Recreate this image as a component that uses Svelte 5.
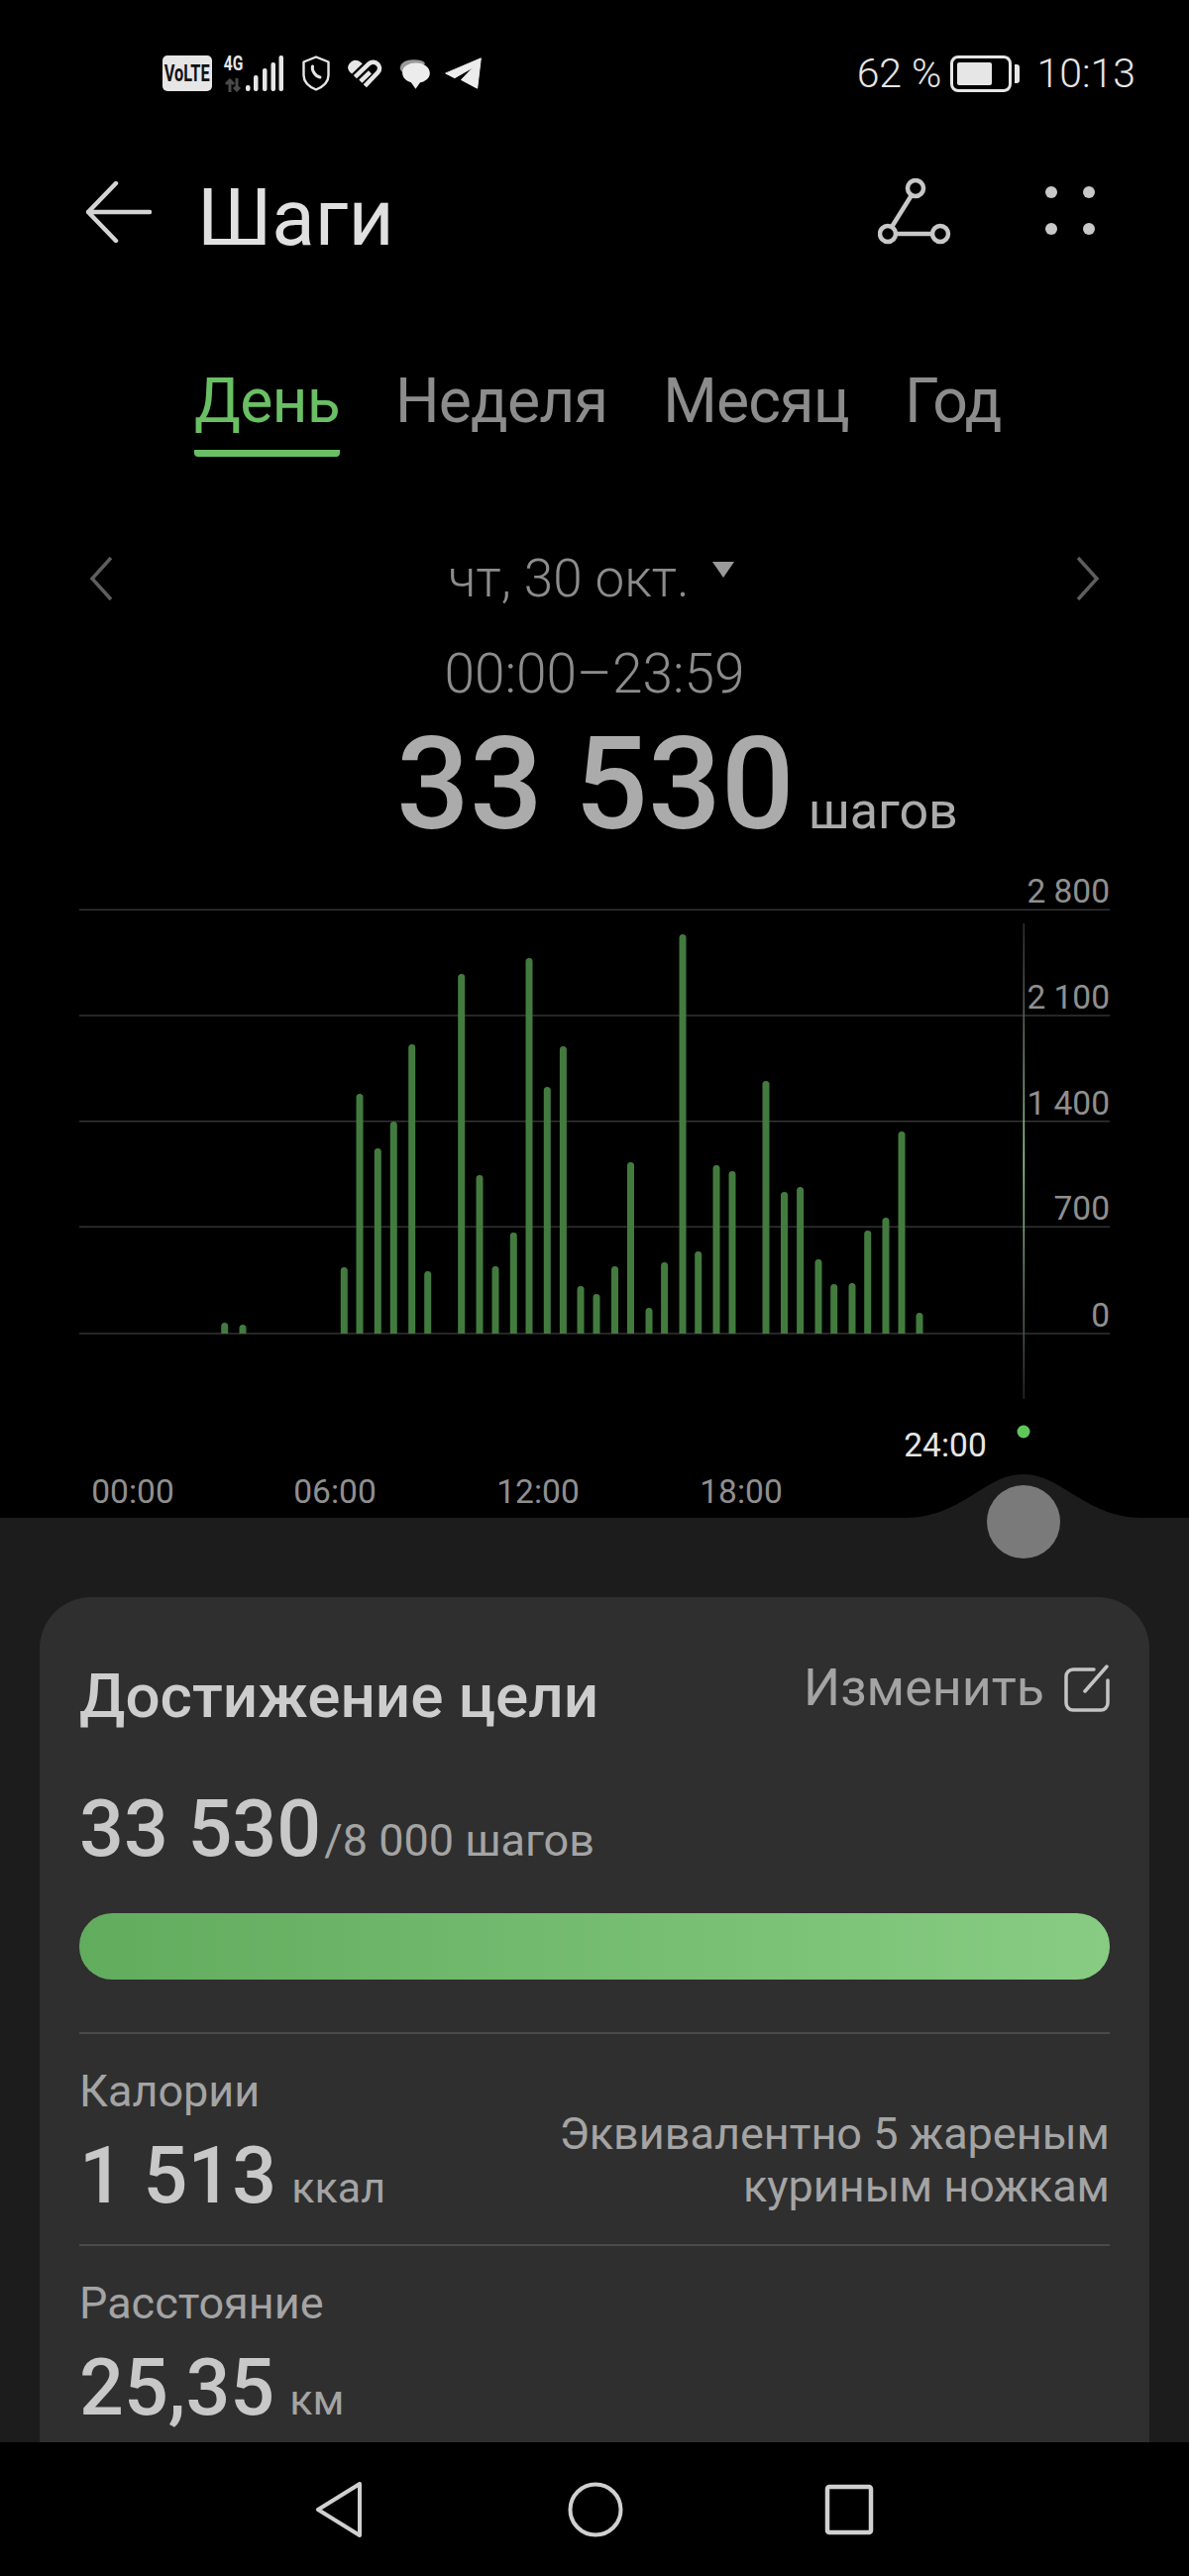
<script lang="ts">
	// x центра столбика и y его верхушки, в координатах графика
	const bars: [number, number][] = [
		[226.7, 1335], [245, 1337], [347.3, 1279], [363, 1104], [381.3, 1159], [397.3, 1132],
		[415.7, 1054], [431.7, 1283], [465.7, 983], [484, 1186], [500, 1278], [518.3, 1244],
		[534, 967], [552.3, 1097], [568.4, 1056], [586, 1298], [602, 1306], [620.5, 1278],
		[636.5, 1173], [655, 1320], [670.6, 1274], [689, 943], [704.7, 1263], [723, 1176],
		[739, 1182], [773, 1091], [791.5, 1203], [807.6, 1198], [826, 1271], [841.7, 1296],
		[860, 1295], [875.7, 1242], [894, 1229], [910, 1142], [928, 1325]
	];
	const grid = [
		{ y: 918.3, label: '2 800' },
		{ y: 1025, label: '2 100' },
		{ y: 1131.7, label: '1 400' },
		{ y: 1238.3, label: '700' },
		{ y: 1346, label: '0' }
	];
	const hours = [
		{ x: 134, label: '00:00' },
		{ x: 338, label: '06:00' },
		{ x: 543, label: '12:00' },
		{ x: 748, label: '18:00' }
	];
	const tabs = ['День', 'Неделя', 'Месяц', 'Год'];

	const barPath = ([x, top]: [number, number]) =>
		`M${x - 3.5} 1346V${top + 3.5}a3.5 3.5 0 0 1 7 0V1346Z`;
</script>

<div class="screen">
	<div class="status">
		<div class="status-left">
			<div class="volte"><span>VoLTE</span></div>
			<div class="net">
				<span class="net-4g">4G</span>
				<svg class="net-arrows" width="18" height="14" viewBox="0 0 18 14" fill="none" stroke="#4a4a4a" stroke-width="3">
					<path d="M5 14V2M1 6l4-4 4 4" />
					<path d="M12 0v12M9 9l3 3 3-3" />
				</svg>
			</div>
			<svg class="signal" width="38" height="36" viewBox="0 0 38 36" fill="#e6e6e6">
				<rect x="0" y="30" width="4.5" height="6" rx="2" />
				<rect x="8" y="20" width="4.5" height="16" rx="2" />
				<rect x="17" y="13" width="4.5" height="23" rx="2" />
				<rect x="25.5" y="7" width="4.5" height="29" rx="2" />
				<rect x="33.5" y="0" width="4.5" height="36" rx="2" />
			</svg>
			<svg class="shield" width="28" height="36" viewBox="0 0 28 36" fill="none" stroke="#e6e6e6" stroke-width="2.4">
				<path d="M14 1.5 26.5 6.5V20C26.5 27 20 32 14 34.5 8 32 1.5 27 1.5 20V6.5Z" stroke-linejoin="round" />
				<path d="M10.5 11c-1 3 2 10 7.5 11" stroke-width="3" stroke-linecap="round" />
			</svg>
			<svg class="heart" width="37" height="33" viewBox="625 52 115 100" fill="none" stroke="#e6e6e6" stroke-width="14">
				<path d="M632 72Q650 48 674 70L641 102Q622 88 632 72Z" fill="#e6e6e6" stroke="none" />
				<path d="M651 112 695 70C712 56 740 78 722 98L682 140" stroke-linecap="butt" />
				<path d="M668 126 698 97" stroke-linecap="butt" />
			</svg>
			<svg class="chat" width="33" height="31" viewBox="783 56 100 95">
				<path d="M788 84Q792 60 830 60 860 60 866 72L800 100Q788 96 788 84Z" fill="#9a9a9a" />
				<path d="M795 100C795 80 815 70 838 70 862 70 880 84 880 102 880 118 862 130 850 130L836 150 822 130C806 126 795 116 795 100Z" fill="#ececec" />
			</svg>
			<svg class="plane" width="37" height="32" viewBox="926 56 112 96">
				<path d="M928 104 1036 58 1025 150 976 124 1012 86 956 118Z" fill="#ececec" stroke="#ececec" stroke-width="3" stroke-linejoin="round" />
			</svg>
		</div>
		<div class="status-right">
			<span class="pct">62 %</span>
			<div class="battery">
				<div class="battery-body"><div class="battery-fill"></div></div>
				<div class="battery-nub"></div>
			</div>
			<span class="clock">10:13</span>
		</div>
	</div>

	<div class="appbar">
		<svg class="back" width="66" height="62" viewBox="0 0 66 62" fill="none" stroke="#d4d4d4" stroke-width="4.5" stroke-linecap="round" stroke-linejoin="round">
			<path d="M2 31H64M30 2 2 31 30 60" />
		</svg>
		<h1>Шаги</h1>
		<svg class="route" width="76" height="68" viewBox="0 0 76 68" fill="none" stroke="#c8c8c8" stroke-width="4.5">
			<circle cx="38" cy="10" r="8" />
			<circle cx="10" cy="56" r="8" />
			<circle cx="63" cy="56" r="8" />
			<path d="M34 17 14 49M18 56H55" />
		</svg>
		<svg class="more" width="50" height="50" viewBox="0 0 50 50" fill="#c8c8c8">
			<circle cx="6" cy="6" r="6" />
			<circle cx="44" cy="6" r="6" />
			<circle cx="6" cy="43" r="6" />
			<circle cx="44" cy="43" r="6" />
		</svg>
	</div>

	<div class="tabs">
		{#each tabs as tab, i}
			<div class="tab" class:active={i === 0}>{tab}</div>
		{/each}
	</div>

	<div class="date-row">
		<svg width="24" height="44" viewBox="0 0 24 44" fill="none" stroke="#5e5e5e" stroke-width="3.5">
			<path d="M22 1 3 22 22 43" />
		</svg>
		<div class="date">
			<span>чт, 30 окт.</span>
			<svg width="24" height="18" viewBox="0 0 24 18" fill="#9a9a9a"><path d="M1 1H23L12 17Z" /></svg>
		</div>
		<svg width="24" height="44" viewBox="0 0 24 44" fill="none" stroke="#5e5e5e" stroke-width="3.5">
			<path d="M2 1 21 22 2 43" />
		</svg>
	</div>

	<div class="range">00:00–23:59</div>
	<div class="total"><span class="total-num">33 530</span><span class="total-unit">шагов</span></div>

	<svg class="chart" width="1200" height="652" viewBox="0 880 1200 652">
		<defs>
			<linearGradient id="cursor" x1="0" y1="0" x2="0" y2="1">
				<stop offset="0" stop-color="#2e2e2e" />
				<stop offset="0.2" stop-color="#56655a" />
				<stop offset="0.5" stop-color="#9ccf96" />
				<stop offset="0.85" stop-color="#4c5a4e" />
				<stop offset="1" stop-color="#262626" />
			</linearGradient>
		</defs>
		{#each grid as line}
			<line x1="80" x2="1120" y1={line.y} y2={line.y} stroke="#333" stroke-width="1.5" />
			<text class="axis" x="1120" y={line.y - 7} text-anchor="end">{line.label}</text>
		{/each}
		<rect x="1032.5" y="932" width="1.6" height="480" fill="url(#cursor)" />
		{#each bars as bar}
			<path d={barPath(bar)} fill="#437b3f" />
		{/each}
		<circle cx="1033" cy="1445" r="6.5" fill="#62c55c" />
		<text class="axis now" x="954" y="1470" text-anchor="middle">24:00</text>
		{#each hours as hour}
			<text class="axis" x={hour.x} y="1517" text-anchor="middle">{hour.label}</text>
		{/each}
	</svg>

	<div class="sheet">
		<svg class="bump" width="240" height="45" viewBox="0 0 240 45" fill="#1c1c1c">
			<path d="M0 45V44C30 44 50 32 67 22 85 11 100 0 120 0 140 0 155 11 173 22 190 32 210 44 240 44V45Z" />
		</svg>
		<div class="knob"></div>

		<div class="card">
			<div class="card-head">
				<h2>Достижение цели</h2>
				<div class="edit">
					<span>Изменить</span>
					<svg width="46" height="48" viewBox="0 0 46 48" fill="none" stroke="#c4c4c4" stroke-width="3.5" stroke-linecap="round">
						<path d="M30 5H9a7 7 0 0 0-7 7v27a7 7 0 0 0 7 7h28a7 7 0 0 0 7-7V16" />
						<path d="M21 27 43 2" />
					</svg>
				</div>
			</div>
			<div class="goal"><span class="num">33 530</span><span class="goal-rest">/8 000 шагов</span></div>
			<div class="progress"></div>
			<div class="row row-split">
				<div>
					<div class="label">Калории</div>
					<div class="value"><span class="num">1 513</span><span class="unit">ккал</span></div>
				</div>
				<div class="note">Эквивалентно 5 жареным<br />куриным ножкам</div>
			</div>
			<div class="row">
				<div class="label">Расстояние</div>
				<div class="value"><span class="num">25,35</span><span class="unit">км</span></div>
			</div>
		</div>
	</div>

	<div class="nav">
		<svg width="48" height="56" viewBox="0 0 48 56" fill="none" stroke="#d0d0d0" stroke-width="4" stroke-linejoin="round">
			<path d="M45 2V54L3 28Z" />
		</svg>
		<svg width="56" height="56" viewBox="0 0 56 56" fill="none" stroke="#d0d0d0" stroke-width="4">
			<circle cx="28" cy="28" r="25.5" />
		</svg>
		<svg width="50" height="52" viewBox="0 0 50 52" fill="none" stroke="#d0d0d0" stroke-width="4.5" stroke-linejoin="round">
			<rect x="3" y="3" width="44" height="46" rx="2" />
		</svg>
	</div>
</div>

<style>
	:global(body) {
		margin: 0;
		background: #000;
	}

	.screen {
		position: relative;
		display: flex;
		flex-direction: column;
		width: 1200px;
		height: 2600px;
		overflow: hidden;
		background: #000;
		color: #8c8c8c;
		font-family: Roboto, 'Noto Sans', sans-serif;
	}

	/* статус-бар */
	.status {
		display: flex;
		flex-shrink: 0;
		justify-content: space-between;
		align-items: center;
		box-sizing: border-box;
		height: 148px;
		padding: 0 54px 0 164px;
		color: #e6e6e6;
	}

	.status-left,
	.status-right {
		display: flex;
		align-items: center;
	}

	.volte {
		display: flex;
		justify-content: center;
		align-items: center;
		width: 50px;
		height: 36px;
		border-radius: 5px;
		background: #e6e6e6;
		color: #111;
		font-size: 24px;
		font-weight: 700;
	}

	.volte span {
		transform: scaleX(0.68);
	}

	.net {
		display: flex;
		flex-direction: column;
		align-items: center;
		width: 20px;
		margin-left: 12px;
	}

	.net-4g {
		font-size: 20px;
		font-weight: 700;
		line-height: 18px;
		transform: scaleX(0.78);
	}

	.net-arrows {
		margin-top: 6px;
	}

	.signal {
		margin-left: 2px;
	}

	.shield {
		margin-left: 19px;
	}

	.heart {
		margin-left: 17px;
	}

	.chat {
		margin-left: 15px;
	}

	.plane {
		margin-left: 14px;
	}

	.pct,
	.clock {
		font-size: 41px;
		font-weight: 300;
		line-height: 48px;
	}

	.battery {
		display: flex;
		align-items: center;
		margin: 0 17px 0 9px;
	}

	.battery-body {
		box-sizing: border-box;
		width: 62px;
		height: 37px;
		padding: 4px;
		border: 3px solid #e6e6e6;
		border-radius: 8px;
	}

	.battery-fill {
		width: 35px;
		height: 100%;
		border-radius: 2px;
		background: #e6e6e6;
	}

	.battery-nub {
		width: 5px;
		height: 19px;
		margin-left: 3px;
		border-radius: 0 3px 3px 0;
		background: #e6e6e6;
	}

	/* шапка */
	.appbar {
		display: flex;
		flex-shrink: 0;
		align-items: center;
		box-sizing: border-box;
		height: 132px;
		padding: 0 0 0 87px;
	}

	h1 {
		flex: 1;
		margin: 12px 0 0 46px;
		color: #e0e0e0;
		font-size: 80px;
		font-weight: 400;
		line-height: 90px;
	}

	.route {
		margin-right: 93px;
		margin-top: 0;
	}

	.more {
		margin-right: 95px;
		margin-top: -3px;
	}

	/* вкладки */
	.tabs {
		display: flex;
		flex-shrink: 0;
		gap: 56px;
		height: 181px;
		box-sizing: border-box;
		padding: 90px 0 0 196px;
	}

	.tab {
		height: 91px;
		box-sizing: border-box;
		font-size: 62.5px;
		letter-spacing: -0.8px;
		line-height: 70px;
	}

	.tab.active {
		border-bottom: 7px solid #6abf64;
		border-radius: 0 0 4px 4px;
		color: #6abf64;
	}

	/* дата и итог */
	.date-row {
		display: flex;
		flex-shrink: 0;
		justify-content: space-between;
		align-items: center;
		height: 182px;
		box-sizing: border-box;
		padding: 64px 90px 0;
	}

	.date {
		display: flex;
		align-items: center;
		gap: 22px;
		margin-left: -6px;
		font-size: 53px;
		font-weight: 300;
		line-height: 60px;
	}

	.date svg {
		margin-top: -18px;
	}

	.range {
		flex-shrink: 0;
		height: 72px;
		font-size: 55px;
		font-weight: 300;
		line-height: 74px;
		text-align: center;
	}

	.total {
		display: flex;
		flex-shrink: 0;
		align-items: baseline;
		box-sizing: border-box;
		height: 165px;
		padding: 12px 0 0 400px;
		color: #ababab;
		line-height: 130px;
	}

	.total-num {
		font-size: 130px;
		font-weight: 500;
	}

	.total-unit {
		margin-left: 14px;
		font-size: 52px;
	}

	/* график */
	.chart {
		display: block;
		flex-shrink: 0;
	}

	.axis {
		fill: #8f8f8f;
		font-size: 33.5px;
		font-weight: 400;
	}

	.axis.now {
		fill: #e6e6e6;
	}

	/* нижняя панель */
	.sheet {
		position: relative;
		flex: 1;
		min-height: 0;
		box-sizing: border-box;
		padding: 80px 40px 0;
		background: #1c1c1c;
	}

	.bump {
		position: absolute;
		top: -44px;
		left: 913px;
	}

	.knob {
		position: absolute;
		top: -33px;
		left: 996px;
		width: 74px;
		height: 74px;
		border-radius: 50%;
		background: #7a7a7a;
	}

	.card {
		box-sizing: border-box;
		height: 980px;
		padding: 65px 40px 0;
		border-radius: 52px;
		background: #2f2f2f;
		color: #a4a4a4;
	}

	.card-head {
		display: flex;
		justify-content: space-between;
		align-items: flex-start;
	}

	h2 {
		margin: 0;
		color: #cdcdcd;
		font-size: 62px;
		font-weight: 500;
		line-height: 70px;
	}

	.edit {
		display: flex;
		align-items: center;
		gap: 20px;
		margin-top: -5px;
		font-size: 52px;
		line-height: 64px;
	}

	.goal {
		display: flex;
		align-items: baseline;
		margin-top: 53px;
		line-height: 92px;
	}

	.num {
		color: #c8c8c8;
		font-size: 79px;
		font-weight: 500;
	}

	.goal-rest {
		margin-left: 3px;
		font-size: 45px;
	}

	.progress {
		height: 67px;
		margin-top: 27px;
		border-radius: 33px;
		background: linear-gradient(90deg, #62ac5e, #87cc82);
	}

	.row {
		height: 214px;
		box-sizing: border-box;
		padding-top: 30px;
		border-top: 2px solid #4a4a4a;
	}

	.progress + .row {
		margin-top: 53px;
	}

	.row-split {
		display: flex;
		justify-content: space-between;
		align-items: flex-start;
	}

	.label {
		font-size: 45px;
		line-height: 56px;
	}

	.value {
		display: flex;
		align-items: baseline;
		margin-top: 11px;
		line-height: 92px;
	}

	.unit {
		margin-left: 15px;
		font-size: 43px;
	}

	.note {
		margin-top: 44px;
		font-size: 45px;
		line-height: 53px;
		text-align: right;
	}

	/* навигация */
	.nav {
		position: relative;
		z-index: 1;
		display: flex;
		flex-shrink: 0;
		justify-content: center;
		align-items: center;
		height: 135px;
		background: #000;
	}

	.nav svg:first-child {
		margin-right: 207px;
	}

	.nav svg:last-child {
		margin-left: 203px;
	}
</style>
